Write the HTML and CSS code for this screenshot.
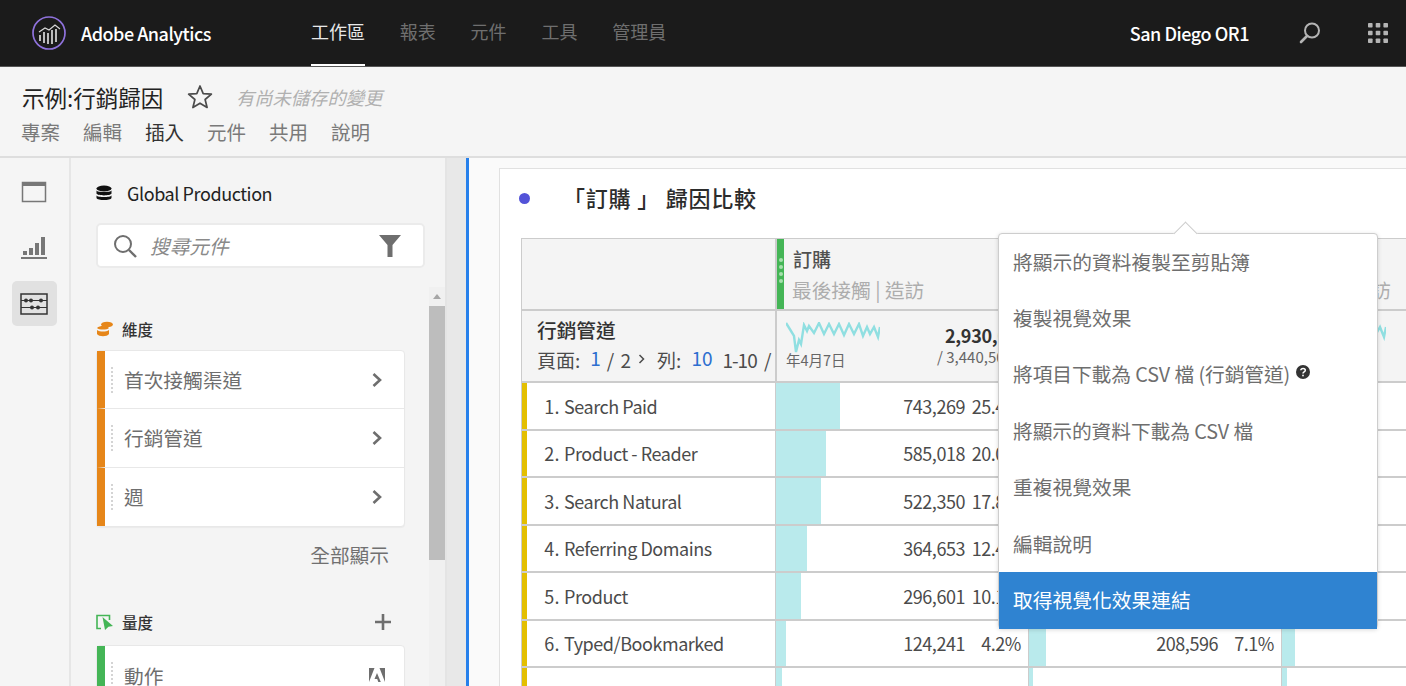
FILE: index.html
```html
<!DOCTYPE html>
<html lang="zh-Hant">
<head>
<meta charset="utf-8">
<title>Adobe Analytics</title>
<link rel="stylesheet" href="styles.css">
</head>
<body>
<div class="app">
  <header class="topbar">
    <svg class="logo" viewBox="0 0 36 36" width="36" height="36"><circle cx="18" cy="18" r="16" fill="none" stroke="#8f72dc" stroke-width="1.7"/><path d="M8 17l6-4 4 2 6-5 5 4" fill="none" stroke="#d8d8d8" stroke-width="1.2"/><path d="M9 20v6M13 17v11M17 18v11M21 15v14M25 14v13" stroke="#d8d8d8" stroke-width="1.7"/></svg>
    <span class="brand">Adobe Analytics</span>
    <nav class="mainnav">
      <a class="navitem active">工作區</a>
      <a class="navitem">報表</a>
      <a class="navitem">元件</a>
      <a class="navitem">工具</a>
      <a class="navitem">管理員</a>
    </nav>
    <span class="org">San Diego OR1</span>
    <svg class="topicon" viewBox="0 0 24 24" width="24" height="24"><circle cx="14" cy="9.500" r="7" fill="none" stroke="#b4b4b4" stroke-width="2"/><path d="M9 15l-6 6" stroke="#b4b4b4" stroke-width="2.600" stroke-linecap="round"/></svg>
    <svg class="apps" viewBox="0 0 20 20" width="20" height="20" fill="#b4b4b4"><rect width="4.600" height="4.600" rx=".8"/><rect x="7.700" width="4.600" height="4.600" rx=".8"/><rect x="15.400" width="4.600" height="4.600" rx=".8"/><rect y="7.700" width="4.600" height="4.600" rx=".8"/><rect x="7.700" y="7.700" width="4.600" height="4.600" rx=".8"/><rect x="15.400" y="7.700" width="4.600" height="4.600" rx=".8"/><rect y="15.400" width="4.600" height="4.600" rx=".8"/><rect x="7.700" y="15.400" width="4.600" height="4.600" rx=".8"/><rect x="15.400" y="15.400" width="4.600" height="4.600" rx=".8"/></svg>
  </header>

  <section class="subbar">
    <div class="titleline">
      <h1 class="project">示例:行銷歸因</h1>
      <svg class="star" viewBox="0 0 26 26" width="26" height="26"><path d="M13 2l3.200 7.600 8.200.6-6.300 5.300 2 8L13 19.200l-7.100 4.300 2-8-6.300-5.300 8.200-.6z" fill="none" stroke="#4b4b4b" stroke-width="1.700" stroke-linejoin="round"/></svg>
      <span class="unsaved">有尚未儲存的變更</span>
    </div>
    <nav class="menubar">
      <a class="menuitem">專案</a>
      <a class="menuitem">編輯</a>
      <a class="menuitem dark">插入</a>
      <a class="menuitem">元件</a>
      <a class="menuitem">共用</a>
      <a class="menuitem">說明</a>
    </nav>
  </section>

  <main class="workspace">
    <aside class="rail">
      <div class="railbtn"><svg viewBox="0 0 26 22" width="26" height="22"><rect x="1.500" y="1.500" width="23" height="19" fill="none" stroke="#777" stroke-width="1.500"/><rect x="1" y="1" width="24" height="4" fill="#777"/></svg></div>
      <div class="railbtn"><svg viewBox="0 0 26 24" width="26" height="24" fill="#777"><rect x="2" y="15" width="4" height="4"/><rect x="8" y="12" width="4" height="7"/><rect x="14" y="7" width="4" height="12"/><rect x="20" y="1" width="4" height="18"/><rect x="0" y="21" width="26" height="2"/></svg></div>
      <div class="railbtn selected"><svg viewBox="0 0 28 22" width="28" height="22"><rect x="1" y="1" width="26" height="20" fill="none" stroke="#333" stroke-width="1.500"/><path d="M1 7.500h26M1 14.500h26" stroke="#333" stroke-width="1"/><g fill="#333"><circle cx="6" cy="7.500" r="2"/><circle cx="11" cy="7.500" r="2"/><circle cx="21" cy="7.500" r="2"/><circle cx="12" cy="14.500" r="2"/><circle cx="18" cy="14.500" r="2"/></g></svg></div>
    </aside>

    <section class="panel">
      <div class="source">
        <svg viewBox="0 0 16 16" width="16" height="16" fill="#111"><ellipse cx="8" cy="3.500" rx="7.500" ry="3"/><path d="M.5 5.500c1 2 14 2 15 0v3c-1 2.500-14 2.500-15 0zM.5 10.500c1 2 14 2 15 0v2.500c-1 2.800-14 2.800-15 0z"/></svg>
        <span>Global Production</span>
      </div>
      <div class="search">
        <svg viewBox="0 0 24 24" width="24" height="24"><circle cx="10" cy="10" r="8" fill="none" stroke="#6e6e6e" stroke-width="2"/><path d="M16 16l7 7" stroke="#6e6e6e" stroke-width="2.400"/></svg>
        <span class="placeholder">搜尋元件</span>
        <svg class="filter" viewBox="0 0 24 24" width="24" height="24"><path d="M1 1h22l-8.500 10v12h-5V11z" fill="#6e6e6e"/></svg>
      </div>
      <div class="scrollarea">
        <div class="components">
          <div class="grouphead first">
            <svg viewBox="0 0 18 16" width="18" height="16" fill="#e68619"><ellipse cx="11" cy="3.500" rx="6" ry="2.800"/><path d="M1 7c3-3 11-2 12 0-2 2-10 2-12 0zM1 9c3 2 9 2 12 0v4c-2 3-10 3-12 0z"/></svg>
            <span>維度</span>
          </div>
          <ul class="list">
            <li class="comp dim"><span class="grip"></span><span class="compname">首次接觸渠道</span><svg class="chev" viewBox="0 0 12 16" width="12" height="16"><path d="M2.500 2l6.500 6-6.500 6" fill="none" stroke="#6e6e6e" stroke-width="2.600"/></svg></li>
            <li class="comp dim"><span class="grip"></span><span class="compname">行銷管道</span><svg class="chev" viewBox="0 0 12 16" width="12" height="16"><path d="M2.500 2l6.500 6-6.500 6" fill="none" stroke="#6e6e6e" stroke-width="2.600"/></svg></li>
            <li class="comp dim"><span class="grip"></span><span class="compname">週</span><svg class="chev" viewBox="0 0 12 16" width="12" height="16"><path d="M2.500 2l6.500 6-6.500 6" fill="none" stroke="#6e6e6e" stroke-width="2.600"/></svg></li>
          </ul>
          <div class="showall">全部顯示</div>
          <div class="grouphead second">
            <svg viewBox="0 0 18 16" width="18" height="16"><path d="M5 14.500H1V1.500h12.500V6" fill="none" stroke="#44b556" stroke-width="1.600"/><path d="M6.500 3l10.500 9-4.500.8-3.500 3.200z" fill="#44b556"/></svg>
            <span>量度</span>
            <svg class="plus" viewBox="0 0 18 18" width="18" height="18"><path d="M9 1v16M1 9h16" stroke="#6e6e6e" stroke-width="2.600"/></svg>
          </div>
          <ul class="list">
            <li class="comp metric"><span class="grip"></span><span class="compname">動作</span><svg class="adobe" viewBox="0 0 16 14" width="16" height="14" fill="#6e6e6e"><path d="M0 0h5.500L0 14zM16 0h-5.500L16 14zM8 5l3.800 9H9.300L8.200 11H5.500z"/></svg></li>
          </ul>
        </div>
        <div class="scrollbar"><span class="uparrow"></span><span class="thumb"></span></div>
      </div>
    </section>

    <div class="gutter"></div>

    <section class="canvas">
      <article class="card">
        <div class="cardhead">
          <span class="dot"></span>
          <h2 class="cardtitle">「訂購 」 歸因比較</h2>
        </div>
        <div class="table">
          <div class="row head">
            <div class="c1"></div>
            <div class="cm hcell"><span class="band"><i></i><i></i><i></i><i></i></span><div class="mname">訂購</div><div class="msub">最後接觸 | 造訪</div></div>
            <div class="cm hcell"><span class="band"></span></div>
            <div class="cm hcell"><span class="band"></span><div class="mname">&nbsp;</div><div class="msub">線性 | 造訪</div></div>
          </div>
          <div class="row summary">
            <div class="c1">
              <div class="dimname">行銷管道</div>
              <div class="pager">頁面:<b>1</b>/ 2<svg viewBox="0 0 8 10" width="8" height="10"><path d="M1.500 1l4 4-4 4" fill="none" stroke="#4b4b4b" stroke-width="1.500"/></svg>列:<b>10</b><span>1-10 /</span></div>
            </div>
            <div class="cm scell">
              <svg class="spark" viewBox="0 0 94 31" width="94" height="31"><path d="M0 1L5 9L8 14L10 30L13 18L15 22L18 3L21 9L23 4L28 11L33 1L38 12L43 2L48 12L53 2L58 13L63 2L68 12L73 2L77 14L81 5L84 12L88 5L92 15L94 5" fill="none" stroke="#90dfe1" stroke-width="2.400"/></svg>
              <div class="sparkdate">年4月7日</div>
              <div class="totals"><strong>2,930,000</strong><span>/ 3,440,500</span></div>
            </div>
            <div class="cm scell"></div>
            <div class="cm scell">
              <svg class="spark" viewBox="0 0 94 31" width="94" height="31"><path d="M0 1L5 9L8 14L10 30L13 18L15 22L18 3L21 9L23 4L28 11L33 1L38 12L43 2L48 12L53 2L58 13L63 2L68 12L73 2L77 14L81 5L84 12L88 5L92 15L94 5" fill="none" stroke="#90dfe1" stroke-width="2.400"/></svg>
            </div>
          </div>
          <div class="row data">
            <div class="c1"><span class="rank">1.</span><span class="label">Search Paid</span></div>
            <div class="cm"><span class="bar" style="width:64px"></span><span class="num">743,269</span><span class="pct">25.4%</span></div>
            <div class="cm"></div><div class="cm"></div>
          </div>
          <div class="row data">
            <div class="c1"><span class="rank">2.</span><span class="label">Product - Reader</span></div>
            <div class="cm"><span class="bar" style="width:50px"></span><span class="num">585,018</span><span class="pct">20.0%</span></div>
            <div class="cm"></div><div class="cm"></div>
          </div>
          <div class="row data">
            <div class="c1"><span class="rank">3.</span><span class="label">Search Natural</span></div>
            <div class="cm"><span class="bar" style="width:45px"></span><span class="num">522,350</span><span class="pct">17.8%</span></div>
            <div class="cm"></div><div class="cm"></div>
          </div>
          <div class="row data">
            <div class="c1"><span class="rank">4.</span><span class="label">Referring Domains</span></div>
            <div class="cm"><span class="bar" style="width:31px"></span><span class="num">364,653</span><span class="pct">12.4%</span></div>
            <div class="cm"></div><div class="cm"></div>
          </div>
          <div class="row data">
            <div class="c1"><span class="rank">5.</span><span class="label">Product</span></div>
            <div class="cm"><span class="bar" style="width:25px"></span><span class="num">296,601</span><span class="pct">10.1%</span></div>
            <div class="cm"></div><div class="cm"></div>
          </div>
          <div class="row data">
            <div class="c1"><span class="rank">6.</span><span class="label">Typed/Bookmarked</span></div>
            <div class="cm"><span class="bar" style="width:10px"></span><span class="num">124,241</span><span class="pct">4.2%</span></div>
            <div class="cm"><span class="bar" style="width:17px"></span><span class="num">208,596</span><span class="pct">7.1%</span></div>
            <div class="cm"><span class="bar" style="width:13px"></span></div>
          </div>
          <div class="row data">
            <div class="c1"></div>
            <div class="cm"><span class="bar" style="width:6px"></span></div>
            <div class="cm"><span class="bar" style="width:4px"></span></div>
            <div class="cm"><span class="bar" style="width:5px"></span></div>
          </div>
        </div>

        <div class="popover">
          <span class="arrow"></span>
          <ul class="popmenu">
            <li>將顯示的資料複製至剪貼簿</li>
            <li>複製視覺效果</li>
            <li><span class="tight">將項目下載為 CSV 檔 (行銷管道)</span><svg class="help" viewBox="0 0 14 14" width="14" height="14"><circle cx="7" cy="7" r="7" fill="#333"/><path d="M4.800 5.300c.2-2.500 4.500-2.500 4.500 0 0 1.700-2.300 1.500-2.300 3.200" fill="none" stroke="#fff" stroke-width="1.500"/><rect x="6.200" y="9.700" width="1.600" height="1.600" fill="#fff"/></svg></li>
            <li><span class="tight">將顯示的資料下載為 CSV 檔</span></li>
            <li>重複視覺效果</li>
            <li>編輯說明</li>
            <li class="hover">取得視覺化效果連結</li>
          </ul>
        </div>
      </article>
    </section>
  </main>
</div>
</body>
</html>
```
FILE: styles.css
```css
* { box-sizing: border-box; }
html, body { margin: 0; padding: 0; height: 686px; overflow: hidden; }
body { font-family: "Noto Sans CJK TC", "Noto Sans", sans-serif; color: #4b4b4b; background: #f5f5f5; }
ul { list-style: none; margin: 0; padding: 0; }
h1, h2 { margin: 0; font-weight: 400; }

.app { width: 1406px; height: 686px; display: flex; flex-direction: column; overflow: hidden; }

.topbar { height: 67px; flex: none; background: #1b1b1b; border-bottom: 1px solid #555; display: flex; align-items: center; padding: 0 18px 1px 31px; }
.logo { flex: none; }
.brand { margin-left: 14px; width: 230px; flex: none; color: #fff; font-size: 18px; letter-spacing: -.5px; font-weight: 500; }
.mainnav { display: flex; gap: 34.800px; height: 66px; flex: none; }
.navitem { display: flex; align-items: center; height: 66px; padding-bottom: 2px; font-size: 18px; color: #6f6f6f; border-bottom: 2px solid transparent; }
.navitem.active { color: #e8e8e8; border-bottom-color: #fff; }
.org { margin-left: auto; color: #fff; font-size: 18px; letter-spacing: -.45px; font-weight: 500; }
.topicon { margin-left: 49px; flex: none; }
.apps { margin-left: 46px; flex: none; }

.subbar { height: 91px; flex: none; background: #f5f5f5; border-bottom: 2px solid #dedede; padding: 12px 0 0 22px; }
.titleline { display: flex; align-items: center; height: 36px; }
.project { font-size: 22.500px; color: #222; width: 165px; flex: none; white-space: nowrap; }
.star { flex: none; }
.unsaved { margin-left: 23px; font-size: 18.300px; font-style: italic; color: #b0b0b0; }
.menubar { display: flex; gap: 23px; margin: 3px 0 0 -1px; }
.menuitem { font-size: 19.500px; line-height: 28px; color: #7a7a7a; }
.menuitem.dark { color: #333; }

.workspace { flex: 1; display: flex; min-height: 0; }
.rail { width: 71px; flex: none; background: #f5f5f5; border-right: 2px solid #e6e6e6; display: flex; flex-direction: column; align-items: center; padding: 11px 1px 0 0; gap: 11px; }
.railbtn { width: 45px; height: 45px; display: flex; align-items: center; justify-content: center; border-radius: 5px; }
.railbtn.selected { background: #e1e1e1; }

.panel { width: 376px; flex: none; background: #f4f4f4; border-right: 2px solid #e4e4e4; padding: 23px 0 0 25px; }
.source { display: flex; align-items: center; gap: 15px; height: 24px; color: #222; font-size: 18px; letter-spacing: -.42px; }
.search { width: 329px; height: 45px; margin-top: 18px; background: #fff; border: 2px solid #ebebeb; border-radius: 5px; display: flex; align-items: center; padding-left: 15px; }
.placeholder { margin-left: 13px; font-size: 19.700px; font-style: italic; color: #8a8a8a; }
.filter { margin-left: auto; margin-right: 21px; }
.scrollarea { display: flex; margin-top: 19px; height: 420px; }
.components { width: 333px; flex: none; }
.grouphead { display: flex; align-items: center; gap: 8px; height: 24px; font-size: 15.500px; color: #333; font-weight: 500; width: 309px; }
.grouphead.first { margin: 30px 0 9px; }
.grouphead.second { margin: 41px 0 11px; }
.plus { margin-left: auto; margin-right: 13px; }
.list { width: 309px; background: #fff; border: 1px solid #e8e8e8; border-radius: 4px; box-shadow: 0 1px 1px rgba(0,0,0,.04); }
.comp { height: 58.330px; display: flex; align-items: center; border-bottom: 1px solid #e8e8e8; border-left: 8px solid; position: relative; }
.comp:last-child { border-bottom: 0; }
.comp.dim { border-left-color: #e68619; }
.comp.metric { border-left-color: #44b556; }
.grip { width: 2px; height: 26px; margin-left: 6px; border-left: 2px dotted #d4d4d4; flex: none; }
.compname { margin-left: 11px; font-size: 19.700px; color: #6e6e6e; }
.chev { margin-left: auto; margin-right: 21px; }
.adobe { margin-left: auto; margin-right: 19px; }
.showall { height: 28px; margin-top: 14px; width: 293px; text-align: right; font-size: 19.700px; line-height: 28px; color: #707070; }
.scrollbar { width: 16px; flex: none; background: #f0f0f0; display: flex; flex-direction: column; align-items: center; }
.uparrow { margin-top: 7px; width: 0; height: 0; border-left: 4px solid transparent; border-right: 4px solid transparent; border-bottom: 5px solid #a6a6a6; }
.thumb { margin-top: 7px; width: 16px; height: 254px; background: #bdbdbd; }

.gutter { width: 22px; flex: none; background: #e8e8e8; border-right: 3px solid #2680eb; }
.canvas { flex: 1; min-width: 0; overflow: hidden; background: #fafafa; padding: 10px 0 0 30px; }
.card { position: relative; width: 1000px; height: 600px; background: #fff; border: 1px solid #e1e1e1; padding: 8px 0 0 21px; }
.cardhead { display: flex; align-items: center; height: 40px; }
.dot { width: 11px; height: 11px; border-radius: 50%; background: #5353d8; margin: 2px 0 0 -2px; }
.cardtitle { margin-left: 33px; font-size: 22px; font-weight: 500; letter-spacing: .8px; color: #2c2c2c; white-space: pre; }

.table { margin-top: 21px; width: 979px; border-left: 1px solid #ccc; border-top: 1px solid #ccc; }
.row { display: flex; border-bottom: 2px solid #ccc; }
.c1 { width: 253px; flex: none; }
.cm { width: 253px; flex: none; border-left: 2px solid #ccc; position: relative; display: flex; align-items: center; }
.row.head { height: 72px; background: #f4f4f4; }
.row.summary { height: 72px; background: #f4f4f4; }
.row.data { height: 47.500px; background: #fff; }
.row.data .cm { border-left-width: 1px; }
.row.data .c1 { border-left: 5px solid #e3bf00; display: flex; align-items: center; font-size: 18px; letter-spacing: -.45px; color: #4b4b4b; }
.rank { width: 33px; text-align: right; flex: none; letter-spacing: .4px; }
.label { margin-left: 4px; white-space: nowrap; }
.bar { position: absolute; left: 0; top: 0; bottom: 0; background: #b9eaec; }
.num { width: 189px; flex: none; text-align: right; font-size: 18px; letter-spacing: -.45px; position: relative; }
.pct { width: 56px; flex: none; text-align: right; font-size: 18px; letter-spacing: -.45px; position: relative; }

.hcell { display: block; padding-left: 15px; }
.band { position: absolute; left: 0; top: 0; bottom: 0; width: 7px; background: #44b556; display: flex; flex-direction: column; align-items: center; justify-content: center; gap: 3px; padding-bottom: 7px; }
.band i { width: 4px; height: 4px; border-radius: 50%; background: #a6e0ad; }
.mname { margin: 6px 0 0 1px; font-size: 19px; line-height: 27px; color: #505050; font-weight: 500; }
.msub { margin-top: 4px; font-size: 19.700px; line-height: 28px; color: #adadad; white-space: nowrap; }

.dimname { padding: 5px 0 0 15px; font-size: 19.700px; line-height: 28px; font-weight: 500; color: #333; }
.pager { display: flex; align-items: center; padding-left: 15px; height: 28px; margin-top: 1px; font-size: 19px; word-spacing: 2px; color: #4b4b4b; white-space: nowrap; }
.pager b { font-weight: 400; color: #2d6fd0; margin: -3px 6px 0 10px; }
.pager svg { margin: 0 11px 0 7px; }
.pager span { margin-left: 4px; letter-spacing: -1px; word-spacing: 4px; }
.scell { display: block; }
.spark { position: absolute; left: 9px; top: 11px; }
.sparkdate { position: absolute; left: 9px; top: 38px; font-size: 14.500px; line-height: 22px; color: #666; white-space: nowrap; }
.totals { position: absolute; left: 160px; top: 13px; white-space: nowrap; display: flex; flex-direction: column; line-height: 22px; }
.totals strong { font-size: 18px; font-weight: 700; color: #333; margin-left: 8px; letter-spacing: -.3px; }
.totals span { font-size: 15px; color: #666; }

.popover { position: absolute; left: 498px; top: 64px; width: 380px; height: 396px; background: #fff; border: 1px solid #cdcdcd; border-radius: 4px; box-shadow: 0 1px 4px rgba(0,0,0,.15); }
.arrow { position: absolute; left: 178px; top: -9px; width: 17px; height: 17px; background: #fff; border-left: 1px solid #cdcdcd; border-top: 1px solid #cdcdcd; transform: rotate(45deg); }
.popmenu { position: relative; }
.popmenu li { height: 56.400px; display: flex; align-items: center; padding: 0 0 2px 14px; font-size: 19.750px; color: #6e6e6e; white-space: nowrap; }
.popmenu li.hover { background: #2f83d1; color: #fff; }
.tight { letter-spacing: -.1px; }
.help { margin: -4px 0 0 6px; }
```
